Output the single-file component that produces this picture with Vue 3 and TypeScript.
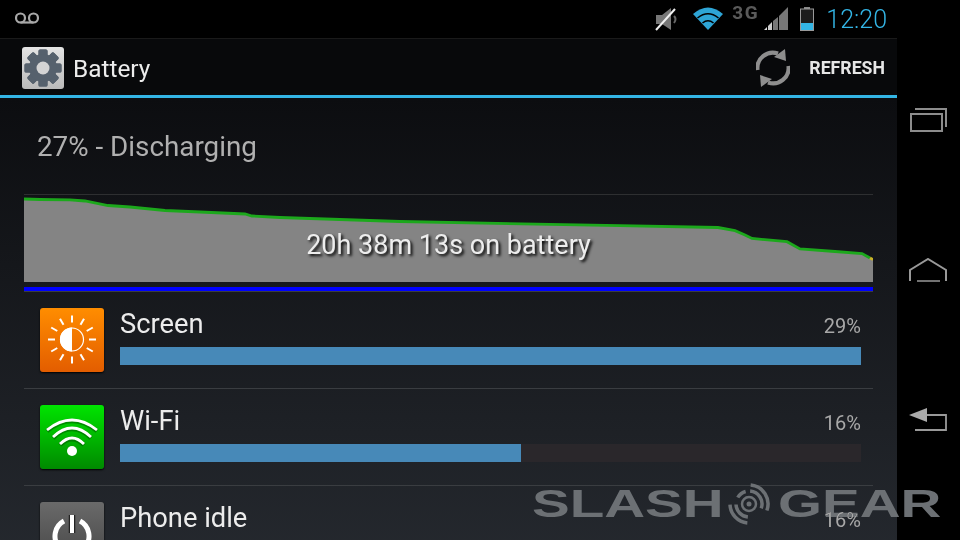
<script setup lang="ts">
const gearTeeth: number[] = [0, 45, 90, 135, 180, 225, 270, 315];
const sunRays: number[] = [0, 30, 60, 90, 120, 150, 180, 210, 240, 270, 300, 330];
const chartTop = 195;
const pts: [number, number][] = [
  [24, 199], [40, 199.5], [70, 199.8], [85, 201], [108, 205.5], [130, 207], [165, 210.5], [200, 212], [245, 214], [252, 216], [280, 217.5],
  [400, 221.5], [620, 225.7], [718, 227.5], [735, 230.7], [745, 235], [752, 238.5], [787, 241.7], [800, 249], [835, 251.5], [862, 253.5], [870, 258]
];
const linePts = pts.map(([x, y]) => `${x - 24},${y - chartTop}`).join(" ");
const areaPts = `0,87 ${linePts} 849,64 849,87`;

function arc(r: number, from: number, to: number): string {
  const p = (deg: number) => {
    const t = (deg * Math.PI) / 180;
    return `${(22 + r * Math.sin(t)).toFixed(2)} ${(22 - r * Math.cos(t)).toFixed(2)}`;
  };
  const large = to - from > 180 ? 1 : 0;
  return `M${p(from)}A${r} ${r} 0 ${large} 1 ${p(to)}`;
}
const logoArcs: string = [
  arc(13, 5, 110),
  arc(19, 5, 110),
  arc(13, 185, 268),
  arc(19, 185, 268),
  arc(13, 300, 345)
].join("");
</script>

<template>
  <div class="device">
    <div class="screen">
      <header class="status">
        <svg class="voicemail" width="24" height="12" viewBox="0 0 24 12">
          <circle cx="5.5" cy="6" r="4.500" fill="none" stroke="#a8a8a8" stroke-width="2.200" />
          <circle cx="18.5" cy="6" r="4.500" fill="none" stroke="#a8a8a8" stroke-width="2.200" />
          <path d="M5.5 10.500H18.5" stroke="#a8a8a8" stroke-width="2.200" />
        </svg>
        <svg class="mute" width="25" height="24" viewBox="0 0 25 24">
          <path d="M1 8H7L16 1V23L7 17H1Z" fill="#777" />
          <path d="M19 9Q22 12 19 16" fill="none" stroke="#666" stroke-width="2" />
          <path d="M1 23L20 2" stroke="#f0f0f0" stroke-width="2" />
        </svg>
        <svg class="wifi" width="30" height="23" viewBox="0 0 30 23">
          <path d="M15 23L0 7Q15 -6 30 7Z" fill="#2ea5d6" />
          <path d="M4.5 11Q15 2.500 25.500 11M9.500 16Q15 11.500 20.500 16" fill="none" stroke="#000" stroke-width="1.600" />
        </svg>
        <span class="net">3G</span>
        <svg class="signal" width="24" height="23" viewBox="0 0 24 23">
          <path d="M0 23H3V20Z" fill="#ddd" />
          <path d="M4 23H8V15L4 19Z" fill="#ccc" />
          <path d="M9 23H14V10L9 14Z" fill="#777" />
          <path d="M15 23H24V0L15 9Z" fill="#777" />
        </svg>
        <svg class="battery" width="14" height="24" viewBox="0 0 14 24">
          <rect x="4" y="0" width="6" height="2" fill="#888" />
          <rect x="0.500" y="2" width="13" height="21.500" fill="#1c1c1c" stroke="#999" />
          <rect x="1" y="16" width="12" height="7" fill="#33b5e5" />
        </svg>
        <span class="clock">12:20</span>
      </header>

      <div class="action">
        <div class="app-tile">
          <svg width="42" height="42" viewBox="0 0 42 42">
            <rect v-for="a in gearTeeth" :key="a" x="16.500" y="2.500" width="9" height="37" rx="1.500" fill="#56616d" :transform="`rotate(${a} 21 21)`" />
            <circle cx="21" cy="21" r="14" fill="#56616d" />
            <circle cx="21" cy="21" r="6.500" fill="#d4d4d4" />
          </svg>
        </div>
        <span class="action-title">Battery</span>
        <svg class="refresh" width="34" height="38" viewBox="0 0 34 38">
          <path d="M1.500 21A15.500 15.500 0 0 1 22 4.500" fill="none" stroke="#8e8e8e" stroke-width="4.200" />
          <path d="M32.500 17A15.500 15.500 0 0 1 12 33.500" fill="none" stroke="#8e8e8e" stroke-width="4.200" />
          <path d="M29 0L30 12L18 8Z" fill="#8e8e8e" />
          <path d="M5 38L4 26L16 30Z" fill="#8e8e8e" />
        </svg>
        <span class="action-label">REFRESH</span>
      </div>

      <main class="content">
        <div class="summary">27% - Discharging</div>
        <div class="chart">
          <svg class="chart-svg" width="849" height="87" viewBox="0 0 849 87">
            <polygon :points="areaPts" fill="#848484" />
            <polyline :points="linePts" fill="none" stroke="#1ca81c" stroke-width="2.800" />
            <path d="M846 63L849 64.500" stroke="#c8b428" stroke-width="2.800" />
          </svg>
          <div class="chart-label">20h 38m 13s on battery</div>
        </div>
        <div class="blue-strip"></div>

        <div class="row">
          <div class="tile tile-orange">
            <svg width="64" height="64" viewBox="0 0 64 64">
              <rect v-for="a in sunRays" :key="a" x="31" y="7.500" width="2" height="7" fill="#fff" :transform="`rotate(${a} 32 31.500)`" />
              <circle cx="32" cy="31.500" r="11.500" fill="none" stroke="#fff" stroke-width="1.200" />
              <path d="M32 19.500A12 12 0 0 0 32 43.500Z" fill="#fff" />
            </svg>
          </div>
          <div class="row-body">
            <div class="row-head"><span class="row-title">Screen</span><span class="row-pct">29%</span></div>
            <div class="track"><div class="fill" :style="{ width: '100%' }"></div></div>
          </div>
        </div>

        <div class="row">
          <div class="tile tile-green">
            <svg width="64" height="64" viewBox="0 0 64 64">
              <path d="M7 26Q32 6 57 26M13 33Q32 15 51 33M20 40Q32 28 44 40" fill="none" stroke="#005a00" stroke-opacity="0.55" stroke-width="4.500" />
              <path d="M7 25Q32 5 57 25M13 32Q32 14 51 32M20 39Q32 27 44 39" fill="none" stroke="#fff" stroke-width="2.800" />
              <circle cx="32" cy="46" r="5" fill="#fff" />
            </svg>
          </div>
          <div class="row-body">
            <div class="row-head"><span class="row-title">Wi-Fi</span><span class="row-pct">16%</span></div>
            <div class="track"><div class="fill" :style="{ width: '54.1%' }"></div></div>
          </div>
        </div>

        <div class="row">
          <div class="tile tile-gray">
            <svg width="64" height="64" viewBox="0 0 64 64">
              <path d="M32 13V31" stroke="#222" stroke-width="6.500" />
              <path d="M24 19A17 17 0 1 0 40 19" fill="none" stroke="#fff" stroke-width="5" />
              <path d="M32 13V31" stroke="#fff" stroke-width="4" />
            </svg>
          </div>
          <div class="row-body">
            <div class="row-head"><span class="row-title">Phone idle</span><span class="row-pct">16%</span></div>
          </div>
        </div>
      </main>
    </div>

    <nav class="nav">
      <svg width="38" height="24" viewBox="0 0 38 24">
        <path d="M6 1H37V19" fill="none" stroke="#8c8c8c" stroke-width="2" />
        <rect x="2" y="6" width="31" height="17" fill="none" stroke="#8c8c8c" stroke-width="2" />
      </svg>
      <svg width="38" height="24" viewBox="0 0 38 24">
        <path d="M1 23V12L19 1L37 12V23" fill="none" stroke="#999" stroke-width="2" />
        <path d="M8 23H31" stroke="#999" stroke-width="1.500" />
      </svg>
      <svg width="38" height="24" viewBox="0 0 38 24">
        <path d="M0 7L18 0V14Z" fill="#aaa" />
        <path d="M18 7H37V22H6" fill="none" stroke="#999" stroke-width="1.800" />
      </svg>
    </nav>

    <div class="watermark" aria-label="SlashGear">
      <span class="mark-word mark-slash">SLASH</span>
      <svg class="mark-logo" width="44" height="44" viewBox="0 0 44 44">
        <circle cx="22" cy="22" r="2.500" fill="#6c7074" />
        <circle cx="22" cy="22" r="7" fill="none" stroke="#6c7074" stroke-width="2.500" />
        <path :d="logoArcs" fill="none" stroke="#6c7074" stroke-width="3.500" />
      </svg>
      <span class="mark-word mark-gear">GEAR</span>
    </div>
  </div>
</template>

<style scoped>
.device {
  position: relative;
  display: flex;
  width: 960px;
  height: 540px;
  overflow: hidden;
  background: #000;
  font-family: Roboto, "Liberation Sans", sans-serif;
}
.screen {
  display: flex;
  flex-direction: column;
  width: 897px;
  height: 540px;
  overflow: hidden;
}
.status {
  display: flex;
  align-items: center;
  flex: none;
  height: 38px;
  padding: 0 10px 0 15px;
  background: #000;
}
.voicemail { margin-top: -2px; }
.mute { margin-left: auto; margin-top: -1px; }
.wifi { margin-left: 13px; margin-top: -2px; }
.net {
  margin-left: 9px;
  margin-top: -13px;
  width: 28px;
  font-size: 19px;
  font-weight: 700;
  letter-spacing: 1.5px;
  color: #5a5a5a;
}
.signal { margin-left: 4px; margin-top: -1px; }
.battery { margin-left: 12px; margin-top: -1px; }
.clock {
  margin-left: 12px;
  margin-top: 1px;
  font-size: 25px;
  font-weight: 300;
  color: #33b5e5;
}
.action {
  display: flex;
  align-items: center;
  flex: none;
  height: 60px;
  padding: 2px 12px 0 22px;
  background: #08090b;
  border-top: 1px solid #1a1a1a;
  border-bottom: 3px solid #33b5e5;
  box-sizing: border-box;
}
.app-tile {
  width: 42px;
  height: 42px;
  border-radius: 3px;
  background: linear-gradient(#e4e4e4, #bababa);
}
.action-title {
  margin-left: 9px;
  margin-top: 1px;
  font-size: 24.4px;
  color: #ececec;
}
.refresh { margin-left: auto; }
.action-label {
  margin-left: 19px;
  font-size: 17.7px;
  font-weight: 700;
  color: #e6e6e6;
}
.content {
  flex: 1;
  padding: 0 24px;
  background: linear-gradient(#0c0d10, #262a30);
}
.summary {
  height: 96px;
  padding: 32px 0 0 13px;
  box-sizing: border-box;
  font-size: 27.8px;
  line-height: 34px;
  color: #b0b0b0;
}
.chart {
  display: grid;
  height: 88px;
  border-top: 1px solid #2e2f31;
  box-sizing: border-box;
}
.chart-svg {
  grid-area: 1 / 1;
  display: block;
}
.chart-label {
  grid-area: 1 / 1;
  align-self: start;
  justify-self: center;
  margin-top: 32px;
  font-size: 27px;
  line-height: 36px;
  color: #ededed;
  text-shadow: 2px 2px 3px #000;
}
.blue-strip {
  height: 4px;
  margin-top: 5px;
  background: #0000ff;
  border-bottom: 1px solid #3a3d40;
}
.row {
  display: flex;
  height: 97px;
  padding: 16px 12px 0 16px;
  box-sizing: border-box;
  border-bottom: 1px solid #3a3d41;
}
.tile {
  flex: none;
  width: 64px;
  height: 64px;
  border-radius: 3px;
  box-shadow: 0 1px 2px #000;
}
.tile-orange { background: linear-gradient(#ff8d00, #e35d00); }
.tile-green { background: linear-gradient(#00e400, #008a00); }
.tile-gray { background: linear-gradient(#6a6a6a, #444); }
.row-body {
  flex: 1;
  margin-left: 16px;
}
.row-head {
  display: flex;
  justify-content: space-between;
  align-items: baseline;
  height: 39px;
}
.row-title {
  font-size: 27.3px;
  line-height: 32px;
  color: #ececec;
}
.row-pct {
  font-size: 20px;
  color: #a8a8a8;
}
.track {
  height: 18px;
  background: #2a272b;
}
.fill {
  height: 100%;
  background: #4789b8;
}
.nav {
  display: flex;
  flex-direction: column;
  align-items: center;
  gap: 126px;
  flex: 1;
  padding-top: 108px;
  padding-right: 1px;
}
.watermark {
  position: absolute;
  left: 532px;
  top: 482px;
  display: flex;
  align-items: center;
  height: 44px;
  mix-blend-mode: lighten;
  font-family: "Liberation Sans", sans-serif;
  font-size: 39px;
  line-height: 46px;
  font-weight: 700;
  color: #6c7074;
}
.mark-word {
  display: inline-block;
  transform: scaleX(1.45);
  transform-origin: left center;
}
.mark-slash { width: 195px; }
.mark-logo { width: 44px; }
.mark-gear { margin-left: 7px; width: 162px; }
</style>
